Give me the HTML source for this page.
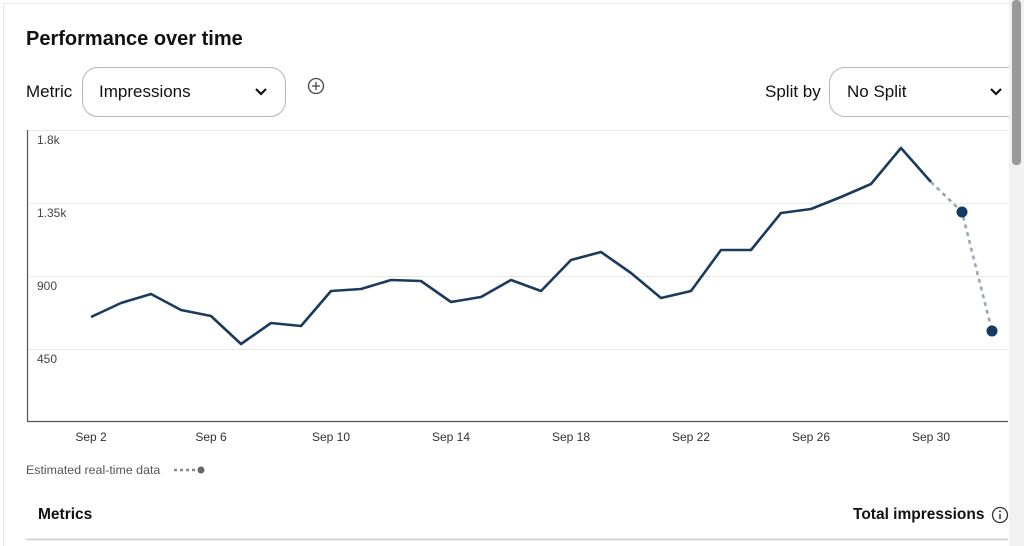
<!DOCTYPE html>
<html><head><meta charset="utf-8"><style>
*{margin:0;padding:0;box-sizing:border-box}
html,body{width:1024px;height:546px;overflow:hidden}
body{background:#fff;font-family:"Liberation Sans",sans-serif;color:#111;position:relative}
.card{position:absolute;left:3px;top:3px;width:1006px;height:543px;border:1px solid #e6e6e6;border-right:none;border-bottom:none}
.sb{position:absolute;left:1009px;top:0;width:15px;height:546px;background:#f1f1f1}
.th{position:absolute;left:1012px;top:0;width:9px;height:165px;background:#999;border-radius:4px}
.t{position:absolute;white-space:nowrap}
.sel{position:absolute;border:1px solid #b5b5b5;border-radius:16px;height:50px;top:67px}
</style></head><body>
<div class="card"></div>
<div class="t" style="left:26px;top:28px;font-size:20px;font-weight:bold">Performance over time</div>
<div class="t" style="left:26px;top:82px;font-size:17px">Metric</div>
<div class="sel" style="left:82px;width:204px"></div>
<div class="t" style="left:99px;top:82px;font-size:17px">Impressions</div>
<svg class="t" style="left:253px;top:86px" width="16" height="12"><path d="M3 3l5 5 5-5" stroke="#111" stroke-width="2.2" fill="none"/></svg>
<svg class="t" style="left:307px;top:77px" width="18" height="18"><circle cx="9" cy="9" r="7.5" stroke="#444" stroke-width="1.3" fill="none"/><path d="M9 5v8M5 9h8" stroke="#444" stroke-width="1.3"/></svg>
<div class="t" style="left:765px;top:82px;font-size:17px">Split by</div>
<div class="sel" style="left:829px;width:180px;border-right:none;border-radius:16px 0 0 16px"></div>
<div class="t" style="left:847px;top:82px;font-size:17px">No Split</div>
<svg class="t" style="left:988px;top:86px" width="16" height="12"><path d="M3 3l5 5 5-5" stroke="#111" stroke-width="2.2" fill="none"/></svg>
<svg class="t" style="left:0;top:0" width="1010" height="546">
<g stroke="#e8e8e8" stroke-width="1"><path d="M27 130.5H1008M27 203.5H1008M27 276.5H1008M27 349.5H1008"/></g>
<path d="M27.5 130V421.5H1008" stroke="#555" stroke-width="1.2" fill="none"/>
<g font-size="12" fill="#444" font-family="Liberation Sans,sans-serif">
<text x="37" y="144">1.8k</text><text x="37" y="217">1.35k</text><text x="37" y="290">900</text><text x="37" y="363">450</text>
<g text-anchor="middle" fill="#333"><text x="91" y="441">Sep 2</text><text x="211" y="441">Sep 6</text><text x="331" y="441">Sep 10</text><text x="451" y="441">Sep 14</text><text x="571" y="441">Sep 18</text><text x="691" y="441">Sep 22</text><text x="811" y="441">Sep 26</text><text x="931" y="441">Sep 30</text></g>
<text x="26" y="474" font-size="12.4" fill="#555">Estimated real-time data</text>
</g>
<path d="M174 470H196" stroke="#888" stroke-width="2.5" stroke-dasharray="3 3"/><circle cx="201" cy="470" r="3.5" fill="#666"/>
<polyline fill="none" stroke="#1b3a5c" stroke-width="2.6" stroke-linejoin="round" points="91,317 121,303 151,294 181,310 211,316 241,344 271,323 301,326 331,291 361,289 391,280 421,281 451,302 481,297 511,280 541,291 571,260 601,252 631,273 661,298 691,291 721,250 751,250 781,213 811,209 841,197 871,184 901,148 931,182"/>
<polyline fill="none" stroke="#9aa8b6" stroke-width="2.6" stroke-dasharray="4 4" points="931,182 962,212 992,331"/>
<circle cx="962" cy="212" r="5.5" fill="#123a63"/><circle cx="992" cy="331" r="5.5" fill="#123a63"/>
<path d="M26 539.5H1008" stroke="#ccc" stroke-width="1.5"/>
</svg>
<div class="t" style="left:38px;top:506px;font-size:15.5px;font-weight:bold">Metrics</div>
<div class="t" style="left:853px;top:506px;font-size:15.5px;font-weight:bold">Total impressions</div>
<svg class="t" style="left:991px;top:506px" width="18" height="18"><circle cx="9" cy="9" r="7.5" stroke="#333" stroke-width="1.3" fill="none"/><path d="M9 8v5" stroke="#333" stroke-width="1.5"/><circle cx="9" cy="5.3" r="1" fill="#333"/></svg>
<div class="sb"></div><div class="th"></div>
</body></html>
